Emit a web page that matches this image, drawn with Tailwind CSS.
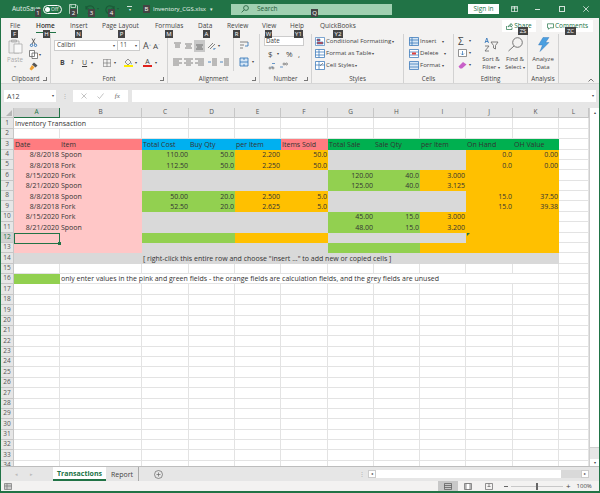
<!DOCTYPE html>
<html lang="en">
<head>
  <meta charset="UTF-8" />
  <title>Inventory_CGS.xlsx - Excel</title>
  <script src="https://cdn.jsdelivr.net/npm/@tailwindcss/browser@4"></script>
</head>
<body class="bg-white overflow-hidden">
  <div class="relative w-[600px] h-[493px] flex flex-col overflow-hidden border-x border-b-2 border-[#217346] bg-[#f3f2f1] font-['Open_Sans',sans-serif] text-[6.5px] leading-none text-[#444]">

    <!-- title bar -->
    <div class="h-[18px] shrink-0 flex items-center bg-[#217346] text-white/90 text-[6.5px]">
      <span class="ml-[11px] w-[31px]">AutoSave</span>
      <span class="w-[19px] h-[9px] rounded-full border border-white flex items-center gap-[1px] px-[1px] text-[5px]"><i class="w-[5px] h-[5px] rounded-full bg-white"></i>Off</span>
      <svg class="ml-[7px] w-[9px] h-[10px]" viewBox="0 0 9 10" fill="none" stroke="#cfe3d6" stroke-width=".8"><path d="M.5.5h6.500l1.500 1.500v7.500h-8zM2 .5v3h4.500v-3M2 9.500v-4h5v4"/></svg>
      <svg class="ml-[7px] w-[10px] h-[9px]" viewBox="0 0 10 9" fill="none" stroke="#1a5a37" stroke-width="1.2"><path d="M1 1v3h3M1.200 4a4 4 0 1 1 1.500 4"/></svg>
      <span class="w-[5px] text-center text-[4px] text-[#1a5a37]">▾</span>
      <svg class="ml-[5px] w-[10px] h-[9px]" viewBox="0 0 10 9" fill="none" stroke="#1a5a37" stroke-width="1.2"><path d="M9 1v3h-3M8.800 4a4 4 0 1 0-1.500 4"/></svg>
      <span class="w-[5px] text-center text-[4px] text-[#1a5a37]">▾</span>
      <span class="ml-[7px] w-[5px] border-t border-white/80 text-center text-[4px] pt-[1px]">▾</span>
      <span class="ml-[21px] w-[53px] shrink-0 whitespace-nowrap text-[6px]">Inventory_CGS.xlsx</span>
      <span class="ml-[3px] w-[5px] text-center text-[5px]">▾</span>
      <div class="ml-[17px] w-[161px] h-[11px] bg-[#a0d0b1] flex items-center text-[#1f5c3a]">
        <svg class="ml-[10px] w-[8px] h-[8px]" viewBox="0 0 8 8" fill="none" stroke="#1f5c3a" stroke-width=".8"><circle cx="5" cy="3" r="2.400"/><path d="M3.200 4.800.6 7.400"/></svg>
        <span class="ml-[8px]">Search</span>
      </div>
      <span class="ml-[76px] w-[31px] h-[10px] bg-white text-[#217346] flex items-center justify-center">Sign in</span>
      <svg class="ml-[12px] w-[7px] h-[6px]" viewBox="0 0 7 6" fill="none" stroke="#fff" stroke-width=".7"><path d="M.4.4h6.200v5.200H.4zM3.500.4v5.200M.4 2h6.200"/></svg>
      <span class="ml-[17px] w-[5px] border-t border-white/80"></span>
      <span class="ml-[19px] w-[6px] h-[6px] border border-white/80"></span>
      <svg class="ml-[18px] w-[6px] h-[6px]" viewBox="0 0 6 6" stroke="#fff" stroke-width=".7"><path d="M.3.3l5.400 5.400M5.700.3.3 5.700"/></svg>
    </div>

    <!-- ribbon tabs -->
    <div class="h-[16px] shrink-0 flex items-center relative pl-[9px] pt-[1px] text-[6.5px]">
      <span class="w-[26px]">File</span>
      <span class="w-[34px] h-full flex items-center font-semibold relative text-[#333]">Home<i class="absolute left-0 top-[13px] w-[20px] h-[1px] bg-[#217346]"></i></span>
      <span class="w-[32px]">Insert</span>
      <span class="w-[53px]">Page Layout</span>
      <span class="w-[43px]">Formulas</span>
      <span class="w-[29px]">Data</span>
      <span class="w-[35px]">Review</span>
      <span class="w-[28px]">View</span>
      <span class="w-[30px]">Help</span>
      <span>QuickBooks</span>
      <div class="absolute left-[501px] top-[2px] w-[34px] h-[12px] bg-white text-[#217346] flex items-center justify-center gap-[1px]">
        <svg class="w-[7px] h-[7px]" viewBox="0 0 7 7" fill="none" stroke="#217346" stroke-width=".7"><path d="M.5 3v3.500h5.500v-2M2 4c.3-1.600 1.500-2.200 3-2.200V.5l1.600 1.800L5 4V2.900c-1.300 0-2.300.3-3 1.100z"/></svg>Share
      </div>
      <div class="absolute left-[541px] top-[2px] w-[51px] h-[12px] bg-white text-[#217346] flex items-center justify-center gap-[1px]">
        <svg class="w-[7px] h-[7px]" viewBox="0 0 7 7" fill="none" stroke="#217346" stroke-width=".7"><path d="M.5.8h6v4h-3.500L1.500 6.300V4.800h-1z"/></svg>Comments
      </div>
    </div>

    <!-- ribbon -->
    <div class="h-[50px] shrink-0 flex border-b border-[#d6d6d6] text-[6.2px]">

      <!-- clipboard -->
      <div class="w-[50px] shrink-0 relative flex flex-col border-r border-[#d2d2d2]">
        <div class="flex-1 flex">
          <div class="w-[28px] flex flex-col items-center pt-[5px] text-[#aaa]">
            <svg class="w-[15px] h-[15px]" viewBox="0 0 15 15" fill="#eee" stroke="#aaa" stroke-width=".8"><path d="M1 2h10v12H1z"/><path d="M6 5h8v9H6z" fill="#f8f8f8"/><path d="M3.500 1h5v2h-5z" fill="#ccc"/></svg>
            <span class="mt-[3px]">Paste</span>
            <span class="mt-[2px] text-[4px]">▾</span>
          </div>
          <div class="flex flex-col gap-[3px] pt-[4px]">
            <svg class="w-[9px] h-[9px]" viewBox="0 0 9 9" fill="none" stroke="#555" stroke-width=".9"><path d="M3 .5 6 6M6 .5 3 6"/><circle cx="2.500" cy="7.300" r="1.200" stroke="#2a6fb5"/><circle cx="6.500" cy="7.300" r="1.200" stroke="#2a6fb5"/></svg>
            <span class="flex items-center gap-[1px]"><svg class="w-[9px] h-[9px]" viewBox="0 0 9 9" fill="#fff" stroke="#666" stroke-width=".8"><path d="M.5.5h5v6h-5zM3 3h5.500v5.500H3z"/></svg><span class="text-[4px]">▾</span></span>
            <svg class="w-[9px] h-[9px]" viewBox="0 0 9 9"><path d="M5 .5l3.500 3-2 2-3.500-3z" fill="#555"/><path d="M3 3 .5 7l2 1.500 3-3z" fill="#f0a030"/></svg>
          </div>
        </div>
        <span class="h-[7px] text-center">Clipboard</span>
        <i class="absolute right-[3px] bottom-[2px] w-[4px] h-[4px] border-b border-r border-[#777]"></i>
      </div>

      <!-- font -->
      <div class="w-[117px] shrink-0 relative flex flex-col border-r border-[#d2d2d2]">
        <div class="flex-1 flex flex-col pl-[3px] pt-[6px]">
          <div class="flex items-center">
            <span class="w-[64px] h-[11px] bg-white border border-[#ccc] flex items-center justify-between px-[2px]">Calibri<span class="text-[4px]">▾</span></span>
            <span class="w-[22px] h-[11px] bg-white border border-l-0 border-[#ccc] flex items-center justify-between px-[2px]">11<span class="text-[4px]">▾</span></span>
            <span class="ml-[3px] text-[9px]">A<sup class="text-[4px] text-[#2a6fb5]">^</sup></span>
            <span class="ml-[2px] text-[8px]">A<sup class="text-[4px] text-[#2a6fb5]">ˇ</sup></span>
          </div>
          <div class="flex items-center mt-[7px] text-[7px] pl-[6px]">
            <b class="w-[11px]">B</b>
            <i class="w-[11px] font-serif">I</i>
            <u class="w-[9px]">U</u>
            <span class="w-[12px] text-[4px]">▾</span>
            <svg class="w-[8px] h-[8px]" viewBox="0 0 8 8" fill="none" stroke="#666" stroke-width=".6"><path d="M.3.3h7.400v7.400H.3zM4 .3v7.400M.3 4h7.400"/></svg>
            <span class="ml-[3px] w-[10px] text-[4px]">▾</span>
            <span class="w-[9px] flex flex-col items-center">
              <svg class="w-[7px] h-[6px]" viewBox="0 0 7 6"><path d="M3 0 6 3 3 6 0 3z" fill="none" stroke="#666" stroke-width=".7"/><path d="M6 3.500c.6.800.8 1.500.2 2-.6-.5-.6-1.200-.2-2z" fill="#2a6fb5"/></svg>
              <i class="w-[9px] h-[2px] bg-[#ffee00]"></i>
            </span>
            <span class="ml-[2px] w-[8px] text-[4px]">▾</span>
            <span class="w-[9px] flex flex-col items-center text-[7px]">A<i class="w-[9px] h-[2px] bg-[#e0201c]"></i></span>
            <span class="ml-[3px] text-[4px]">▾</span>
          </div>
        </div>
        <span class="h-[7px] text-center">Font</span>
        <i class="absolute right-[3px] bottom-[2px] w-[4px] h-[4px] border-b border-r border-[#777]"></i>
      </div>

      <!-- alignment -->
      <div class="w-[92px] shrink-0 relative flex flex-col border-r border-[#d2d2d2]">
        <div class="flex-1 flex">
          <div class="w-[65px] pl-[4px] pt-[6px] flex flex-col">
            <div class="flex items-center h-[12px]">
              <svg class="w-[11px] h-[8px]" viewBox="0 0 11 8" stroke="#666" stroke-width=".8"><path d="M2 1h7M3 3h5M3 5h5"/></svg>
              <svg class="w-[11px] h-[8px]" viewBox="0 0 11 8" stroke="#666" stroke-width=".8"><path d="M2 2h7M3 4h5M2 6h7"/></svg>
              <span class="w-[11px] h-[12px] bg-[#c8c8c8] flex items-center"><svg class="w-[11px] h-[8px]" viewBox="0 0 11 8" stroke="#555" stroke-width=".8"><path d="M2 3h7M3 5h5M2 7h7"/></svg></span>
              <svg class="ml-[2px] w-[9px] h-[9px]" viewBox="0 0 9 9" stroke="#666" fill="none" stroke-width=".8"><path d="M1 6 6 1M3 7 8 2"/><path d="M6 7h2v-1" stroke="#2a6fb5"/></svg>
              <span class="ml-[2px] text-[4px]">▾</span>
            </div>
            <div class="flex items-center mt-[5px] h-[10px]">
              <svg class="w-[11px] h-[8px]" viewBox="0 0 11 8" stroke="#666" stroke-width=".8"><path d="M1 1h9M1 3h6M1 5h9M1 7h6"/></svg>
              <svg class="w-[11px] h-[8px]" viewBox="0 0 11 8" stroke="#666" stroke-width=".8"><path d="M1 1h9M3 3h5M1 5h9M3 7h5"/></svg>
              <svg class="w-[11px] h-[8px]" viewBox="0 0 11 8" stroke="#666" stroke-width=".8"><path d="M1 1h9M4 3h6M1 5h9M4 7h6"/></svg>
              <svg class="ml-[2px] w-[11px] h-[8px]" viewBox="0 0 11 8" stroke="#666" stroke-width=".8"><path d="M5 1h5M5 3h5M5 5h5M5 7h5"/><path d="M4 4H1" stroke="#2a6fb5"/></svg>
              <svg class="ml-[1px] w-[11px] h-[8px]" viewBox="0 0 11 8" stroke="#666" stroke-width=".8"><path d="M5 1h5M5 3h5M5 5h5M5 7h5"/><path d="M1 4h3" stroke="#2a6fb5"/></svg>
            </div>
          </div>
          <div class="pl-[5px] pt-[5px] flex flex-col border-l border-[#d2d2d2] h-[36px] mt-[1px]">
            <svg class="w-[10px] h-[10px]" viewBox="0 0 10 10" stroke="#666" fill="none" stroke-width=".8"><path d="M1 2h8M1 5h4M1 8h3"/><path d="M9 2v4H6" stroke="#2a6fb5"/></svg>
            <div class="flex items-center mt-[7px]">
              <svg class="w-[10px] h-[10px]" viewBox="0 0 10 10" fill="#d6e6f5" stroke="#2a6fb5" stroke-width=".8"><path d="M1 1h8v8H1zM1 5h8M5 1v2M5 7v2"/></svg>
              <span class="ml-[3px] text-[4px]">▾</span>
            </div>
          </div>
        </div>
        <span class="h-[7px] text-center">Alignment</span>
        <i class="absolute right-[3px] bottom-[2px] w-[4px] h-[4px] border-b border-r border-[#777]"></i>
      </div>

      <!-- number -->
      <div class="w-[52px] shrink-0 relative flex flex-col border-r border-[#d2d2d2]">
        <div class="flex-1 flex flex-col pl-[4px] pt-[2px]">
          <span class="w-[40px] h-[10px] bg-white border border-[#ccc] flex items-center px-[1px]">Date</span>
          <div class="flex items-center mt-[4px] text-[8px] pl-[4px]">
            <span class="w-[9px]">$</span><span class="w-[9px] text-[4px]">▾</span><span class="w-[12px]">%</span><span>,</span>
          </div>
          <div class="flex items-center mt-[4px] pl-[3px] gap-[3px]">
            <svg class="w-[9px] h-[8px]" viewBox="0 0 9 8" fill="none" stroke="#666" stroke-width=".7"><path d="M4 5h2M5 1.500h3" stroke="#2a6fb5"/><circle cx="3" cy="6" r="1"/><circle cx="6" cy="6" r="1"/></svg>
            <svg class="w-[9px] h-[8px]" viewBox="0 0 9 8" fill="none" stroke="#666" stroke-width=".7"><path d="M1 5h3" stroke="#2a6fb5"/><circle cx="5" cy="2" r="1"/><circle cx="7.500" cy="2" r="1"/></svg>
          </div>
        </div>
        <span class="h-[7px] text-center">Number</span>
        <i class="absolute right-[3px] bottom-[2px] w-[4px] h-[4px] border-b border-r border-[#777]"></i>
      </div>

      <!-- styles -->
      <div class="w-[92px] shrink-0 flex flex-col border-r border-[#d2d2d2]">
        <div class="flex-1 flex flex-col pl-[3px] pt-[3px] gap-[3px]">
          <div class="flex items-center h-[9px]"><svg class="w-[10px] h-[9px]" viewBox="0 0 10 9" stroke="#2a6fb5" stroke-width=".6"><path d="M.5.5h9v8h-9z" fill="#fff"/><path d="M2 2h3v2H2z" fill="#e0403a"/><path d="M2 5h6v2H2z" fill="#e0403a"/></svg><span class="ml-[1px] text-[6.1px]">Conditional Formatting</span><span class="ml-[1px] text-[4px]">▾</span></div>
          <div class="flex items-center h-[9px]"><svg class="w-[10px] h-[9px]" viewBox="0 0 10 9" fill="#fff" stroke="#2a6fb5" stroke-width=".7"><path d="M.5.5h9v8h-9zM.5 3h9M.5 6h9M4 .5v8"/></svg><span class="ml-[1px] text-[6.1px]">Format as Table</span><span class="ml-[1px] text-[4px]">▾</span></div>
          <div class="flex items-center h-[9px]"><svg class="w-[10px] h-[9px]" viewBox="0 0 10 9" fill="#fff" stroke="#2a6fb5" stroke-width=".7"><path d="M.5.5h9v8h-9zM.5 4h9M4 .5v8"/><path d="M5 5l3-3" stroke="#666"/></svg><span class="ml-[1px] text-[6.1px]">Cell Styles</span><span class="ml-[1px] text-[4px]">▾</span></div>
        </div>
        <span class="h-[7px] text-center">Styles</span>
      </div>

      <!-- cells -->
      <div class="w-[50px] shrink-0 flex flex-col border-r border-[#d2d2d2]">
        <div class="flex-1 flex flex-col pl-[5px] pt-[3px] gap-[3px]">
          <div class="flex items-center h-[9px]"><svg class="w-[10px] h-[9px]" viewBox="0 0 10 9" fill="#d6e6f5" stroke="#2a6fb5" stroke-width=".7"><path d="M.5.5h9v8h-9zM.5 3h9M.5 6h9M3 .5v8"/></svg><span class="ml-[1px] w-[22px] text-[6.1px]">Insert</span><span class="text-[4px]">▾</span></div>
          <div class="flex items-center h-[9px]"><svg class="w-[10px] h-[9px]" viewBox="0 0 10 9" fill="#fff" stroke="#2a6fb5" stroke-width=".7"><path d="M.5.5h9v8h-9zM.5 3h9M.5 6h9"/><path d="M3 3.500h4v2H3z" fill="#e0403a" stroke="none"/></svg><span class="ml-[1px] w-[24px] text-[6.1px]">Delete</span><span class="text-[4px]">▾</span></div>
          <div class="flex items-center h-[9px]"><svg class="w-[10px] h-[9px]" viewBox="0 0 10 9" fill="#d6e6f5" stroke="#2a6fb5" stroke-width=".7"><path d="M.5.5h9v8h-9zM.5 3h9M.5 6h9"/></svg><span class="ml-[1px] w-[22px] text-[6.1px]">Format</span><span class="text-[4px]">▾</span></div>
        </div>
        <span class="h-[7px] text-center">Cells</span>
      </div>

      <!-- editing -->
      <div class="w-[74px] shrink-0 flex flex-col border-r border-[#d2d2d2]">
        <div class="flex-1 flex">
          <div class="w-[25px] pl-[4px] pt-[2px] flex flex-col gap-[3px]">
            <div class="flex items-center h-[9px] gap-[2px]"><span class="w-[9px] text-[10px]">Σ</span><span class="text-[4px]">▾</span></div>
            <div class="flex items-center h-[9px] gap-[2px]"><svg class="w-[9px] h-[8px]" viewBox="0 0 9 8" fill="#fff" stroke="#666" stroke-width=".7"><path d="M.5.5h8v7h-8z"/><path d="M4.500 2v4M3 4.500l1.500 1.500 1.500-1.500" stroke="#2a6fb5" fill="none"/></svg><span class="text-[4px]">▾</span></div>
            <div class="flex items-center h-[9px] gap-[2px]"><svg class="w-[9px] h-[8px]" viewBox="0 0 9 8"><path d="M.5 5.500 5 1l3.500 2.500L4 7.500H2z" fill="#c85fc8"/></svg><span class="text-[4px]">▾</span></div>
          </div>
          <div class="w-[24px] flex flex-col items-center">
            <svg class="mt-[3px] w-[16px] h-[15px]" viewBox="0 0 16 15" fill="none" stroke="#666" stroke-width=".8"><path d="M8 5h7l-2.500 3.500V12l-2-1V8.500z"/><path d="M2 6 3.800 1 5.500 6M2.600 4.500h2.400" stroke="#2a6fb5"/><path d="M2 9h4L2 14h4"/></svg>
            <span class="mt-[4px] text-[6px]">Sort &amp;</span>
            <span class="mt-[2px] text-[6px]">Filter <span class="text-[4px]">▾</span></span>
          </div>
          <div class="w-[24px] flex flex-col items-center">
            <svg class="mt-[3px] w-[17px] h-[15px]" viewBox="0 0 17 15" fill="none" stroke="#666" stroke-width=".9"><circle cx="10.500" cy="5.500" r="4.800"/><path d="M7 9 1.500 14"/></svg>
            <span class="mt-[4px] text-[6px]">Find &amp;</span>
            <span class="mt-[2px] text-[6px] whitespace-nowrap">Select <span class="text-[4px]">▾</span></span>
          </div>
        </div>
        <span class="h-[7px] text-center">Editing</span>
      </div>

      <!-- analysis -->
      <div class="w-[31px] shrink-0 flex flex-col border-r border-[#d2d2d2]">
        <div class="flex-1 flex flex-col items-center">
          <svg class="mt-[3px] w-[13px] h-[15px]" viewBox="0 0 13 15"><path d="M6 .5h6L8.500 5.500H12L3 14.500 5.500 8H1.500z" fill="#4a9fe0" stroke="#2a6fb5" stroke-width=".4"/></svg>
          <span class="mt-[4px] text-[6px]">Analyze</span>
          <span class="mt-[2px] text-[6px]">Data</span>
        </div>
        <span class="h-[7px] text-center">Analysis</span>
      </div>

      <div class="flex-1 flex items-end justify-end pr-[5px] pb-[1px]">
        <svg class="w-[6px] h-[4px]" viewBox="0 0 6 4" fill="none" stroke="#555" stroke-width=".8"><path d="M.5 3.500 3 1l2.500 2.500"/></svg>
      </div>
    </div>

    <!-- formula bar -->
    <div class="h-[24px] shrink-0 bg-[#e6e6e6] flex items-start pt-[6px] pl-[3px] pr-[3px]">
      <div class="w-[52px] h-[12px] bg-white flex items-center justify-between pl-[3px] pr-[2px] text-[7px]">A12<span class="text-[4px]">▾</span></div>
      <span class="w-[17px] h-[12px] flex items-center justify-center text-[#aaa] text-[6px]">⋮</span>
      <div class="w-[55px] h-[12px] bg-white flex items-center justify-around px-[3px] text-[#aaa]">
        <svg class="w-[6px] h-[6px]" viewBox="0 0 6 6" stroke="#aaa" stroke-width=".7"><path d="M.5.500l5 5M5.500.500l-5 5"/></svg>
        <svg class="w-[7px] h-[6px]" viewBox="0 0 7 6" fill="none" stroke="#aaa" stroke-width=".7"><path d="M.5 3.500 2.500 5.500 6.500.5"/></svg>
        <span class="italic font-['Liberation_Serif',serif] text-[#666] text-[7px]">fx</span>
      </div>
      <div class="ml-[4px] flex-1 h-[12px] bg-white flex items-center justify-end pr-[2px] text-[4px]">▾</div>
    </div>

    <!-- sheet area -->
    <div class="h-[358px] shrink-0 flex bg-white overflow-hidden relative">
      <div id="sheet" class="w-[588px] h-full overflow-hidden grid grid-cols-[13px_46px_82px_47px_46px_46px_47px_46px_46px_46px_47px_46px_30px] auto-rows-[10.39px] text-[7px] text-[#333] content-start"></div>
      <div class="w-[10px] h-full bg-[#e6e6e6] flex flex-col border-l border-[#cfcfcf]">
        <span class="h-[10px] bg-white flex items-center justify-center text-[4px]">▴</span>
        <span class="h-[330px] bg-white border-b border-[#cfcfcf]"></span>
        <span class="flex-1"></span>
        <span class="h-[7px] bg-white flex items-center justify-center text-[4px]">▾</span>
      </div>
      <!-- selected cell and error mark -->
      <div class="absolute left-[13px] top-[125px] w-[46px] h-[11px] border border-[#217346]"><i class="absolute -right-[2px] -bottom-[2px] w-[3px] h-[3px] bg-[#217346]"></i></div>
      <svg class="absolute left-[466px] top-[125px] w-[3px] h-[3px]" viewBox="0 0 3 3"><path d="M0 0h3L0 3z" fill="#217346"/></svg>
    </div>

    <!-- sheet tabs -->
    <div class="h-[15px] shrink-0 flex items-center bg-[#e6e6e6] border-t border-[#bdbdbd] text-[7px]">
      <span class="ml-[14px] w-[15px] text-[5px] text-[#bbb]">◂</span>
      <span class="w-[23px] text-[5px] text-[#bbb]">▸</span>
      <span class="w-[53px] h-full bg-white border-b-2 border-[#217346] text-[#217346] font-bold flex items-center justify-center">Transactions</span>
      <span class="w-[33px] h-full flex items-center justify-center border-r border-[#aaa]">Report</span>
      <svg class="ml-[15px] w-[9px] h-[9px]" viewBox="0 0 9 9" fill="none" stroke="#666" stroke-width=".7"><circle cx="4.500" cy="4.500" r="4"/><path d="M4.500 2.500v4M2.500 4.500h4"/></svg>
      <span class="ml-[196px] w-[9px] text-[#aaa] text-[6px]">⋮</span>
      <div class="w-[221px] h-[8px] flex bg-[#d9d9d9]">
        <span class="w-[8px] bg-white border border-[#ccc] flex items-center justify-center text-[4px]">◂</span>
        <span class="w-[185px] bg-white"></span>
        <span class="flex-1"></span>
        <span class="w-[8px] bg-white border border-[#ccc] flex items-center justify-center text-[4px]">▸</span>
      </div>
    </div>

    <!-- status bar -->
    <div class="flex-1 flex items-center text-[6px]">
      <svg class="ml-[3px] w-[8px] h-[7px]" viewBox="0 0 8 7" fill="#ccc" stroke="#777" stroke-width=".7"><path d="M.5.500h7v6h-7zM.5 3h7M3 .500v6"/></svg>
      <span class="ml-[426px] w-[20px] h-full bg-[#c8c8c8] flex items-center justify-center">
        <svg class="w-[8px] h-[7px]" viewBox="0 0 8 7" fill="none" stroke="#555" stroke-width=".7"><path d="M.5.500h7v6h-7zM.5 2.500h7M.5 4.500h7"/></svg>
      </span>
      <span class="w-[20px] h-full flex items-center justify-center">
        <svg class="w-[8px] h-[7px]" viewBox="0 0 8 7" fill="#ddd" stroke="#666" stroke-width=".7"><path d="M.5.500h7v6h-7z"/><path d="M2 .500h4v6H2z" fill="#fff"/></svg>
      </span>
      <span class="w-[22px] h-full flex items-center justify-center">
        <svg class="w-[8px] h-[7px]" viewBox="0 0 8 7" fill="none" stroke="#666" stroke-width=".7"><path d="M.5.500h7v6h-7zM4 .500v3M2.500 3.500h3"/></svg>
      </span>
      <span class="ml-[4px] w-[4px] border-t border-[#666]"></span>
      <div class="ml-[3px] w-[52px] h-[1px] bg-[#c8c8c8] relative"><i class="absolute left-[25px] -top-[3px] w-[2px] h-[7px] bg-[#666]"></i></div>
      <span class="ml-[3px] text-[8px]">+</span>
      <span class="ml-[6px]">100%</span>
    </div>

    <!-- keytips -->
    <span class="absolute left-[34px] top-[9px] w-[6px] h-[8px] bg-[#444] text-white text-[6px] flex items-center justify-center">1</span>
    <span class="absolute left-[69px] top-[9px] w-[7px] h-[8px] bg-[#444] text-white text-[6px] flex items-center justify-center">2</span>
    <span class="absolute left-[87px] top-[9px] w-[7px] h-[8px] bg-[#444] text-white text-[6px] flex items-center justify-center">3</span>
    <span class="absolute left-[107px] top-[9px] w-[7px] h-[8px] bg-[#444] text-white text-[6px] flex items-center justify-center">4</span>
    <span class="absolute left-[142px] top-[5px] w-[7px] h-[8px] bg-[#444] text-white text-[6px] flex items-center justify-center">B</span>
    <span class="absolute left-[310px] top-[9px] w-[7px] h-[8px] bg-[#444] text-white text-[6px] flex items-center justify-center">Q</span>
    <span class="absolute left-[10px] top-[30px] w-[7px] h-[8px] bg-[#444] text-white text-[6px] flex items-center justify-center">F</span>
    <span class="absolute left-[42px] top-[30px] w-[7px] h-[8px] bg-[#444] text-white text-[6px] flex items-center justify-center">H</span>
    <span class="absolute left-[74px] top-[30px] w-[7px] h-[8px] bg-[#444] text-white text-[6px] flex items-center justify-center">N</span>
    <span class="absolute left-[117px] top-[30px] w-[7px] h-[8px] bg-[#444] text-white text-[6px] flex items-center justify-center">P</span>
    <span class="absolute left-[164px] top-[30px] w-[8px] h-[8px] bg-[#444] text-white text-[6px] flex items-center justify-center">M</span>
    <span class="absolute left-[202px] top-[30px] w-[7px] h-[8px] bg-[#444] text-white text-[6px] flex items-center justify-center">A</span>
    <span class="absolute left-[232px] top-[30px] w-[7px] h-[8px] bg-[#444] text-white text-[6px] flex items-center justify-center">R</span>
    <span class="absolute left-[264px] top-[30px] w-[7px] h-[8px] bg-[#444] text-white text-[6px] flex items-center justify-center">W</span>
    <span class="absolute left-[293px] top-[30px] w-[9px] h-[8px] bg-[#444] text-white text-[6px] flex items-center justify-center">Y1</span>
    <span class="absolute left-[332px] top-[30px] w-[10px] h-[8px] bg-[#444] text-white text-[6px] flex items-center justify-center">Y2</span>
    <span class="absolute left-[517px] top-[27px] w-[10px] h-[8px] bg-[#444] text-white text-[6px] flex items-center justify-center">ZS</span>
    <span class="absolute left-[564px] top-[27px] w-[11px] h-[8px] bg-[#444] text-white text-[6px] flex items-center justify-center">ZC</span>
  </div>

  <script>
    const fills = {
      r: 'bg-[#ff7c80]', b: 'bg-[#00b0f0]', g: 'bg-[#00b050]', p: 'bg-[#ffc7c7]',
      l: 'bg-[#92d050]', o: 'bg-[#ffc000]', x: 'bg-[#d9d9d9]'
    };
    const plain = 'border-r border-b border-[#e3e3e3]';
    const cols = ['A','B','C','D','E','F','G','H','I','J','K','L'];

    // one letter per column A..K, L is always blank
    const bought = 'pplloo' + 'xxxoo';
    const sold = 'ppxxxx' + 'llooo';
    const rowFills = {
      3: 'rrbbbrggggg', 4: bought, 5: bought, 6: sold, 7: sold, 8: bought, 9: bought,
      10: sold, 11: sold, 12: bought, 13: sold, 14: 'xxxxxxxxxxx', 16: 'l'
    };
    // overflowing text: first column index -> span class
    const spans = {
      1: { 0: ['col-span-2', 2] },
      14: { 2: ['col-span-9', 9] },
      16: { 1: ['col-span-10', 10] }
    };
    const text = {
      1: ['Inventory Transaction'],
      3: ['Date','Item','Total Cost','Buy Qty','per Item','Items Sold','Total Sale','Sale Qty','per Item','On Hand','OH Value'],
      4: ['8/8/2018','Spoon','110.00','50.0','2.200','50.0','','','','0.0','0.00'],
      5: ['8/8/2018','Fork','112.50','50.0','2.250','50.0','','','','0.0','0.00'],
      6: ['8/15/2020','Fork','','','','','120.00','40.0','3.000'],
      7: ['8/21/2020','Spoon','','','','','125.00','40.0','3.125'],
      8: ['8/8/2018','Spoon','50.00','20.0','2.500','5.0','','','','15.0','37.50'],
      9: ['8/8/2018','Fork','52.50','20.0','2.625','5.0','','','','15.0','39.38'],
      10: ['8/15/2020','Fork','','','','','45.00','15.0','3.000'],
      11: ['8/21/2020','Spoon','','','','','48.00','15.0','3.200'],
      14: ['','','[ right-click this entire row and choose "insert ..." to add new or copied cells ]'],
      16: ['','only enter values in the pink and green fields - the orange fields are calculation fields, and the grey fields are unused']
    };

    let html = '<div class="bg-[#e6e6e6] border-r border-b border-[#c6c6c6] flex items-end justify-end"><svg class="w-[6px] h-[6px] mb-[1px] mr-[1px]" viewBox="0 0 6 6"><path d="M6 0v6H0z" fill="#b5b5b5"/></svg></div>';
    cols.forEach(c => {
      const on = c === 'A';
      html += `<div class="${on ? 'bg-[#d2d2d2] border-b border-[#217346] text-[#217346]' : 'bg-[#e6e6e6] border-b border-[#c6c6c6] text-[#555]'} border-r flex items-center justify-center text-[6.5px]">${c}</div>`;
    });

    for (let r = 1; r <= 34; r++) {
      const on = r === 12;
      html += `<div class="${on ? 'bg-[#d2d2d2] text-[#217346]' : 'bg-[#e6e6e6] text-[#555]'} border-r border-b border-[#c6c6c6] flex items-center justify-center text-[6.5px]">${r}</div>`;
      const f = rowFills[r] || '';
      const vals = text[r] || [];
      for (let i = 0; i < cols.length; i++) {
        const span = spans[r] && spans[r][i];
        const fill = fills[f[i]];
        const v = vals[i] || '';
        const left = r === 3 || i === 1 || span;
        html += `<div class="${span ? span[0] : ''} ${fill || plain} flex items-center whitespace-nowrap ${left ? 'pl-[1px]' : 'justify-end pr-[1px]'}"><span>${v}</span></div>`;
        if (span) i += span[1] - 1;
      }
    }
    document.getElementById('sheet').innerHTML = html;
  </script>
</body>
</html>
